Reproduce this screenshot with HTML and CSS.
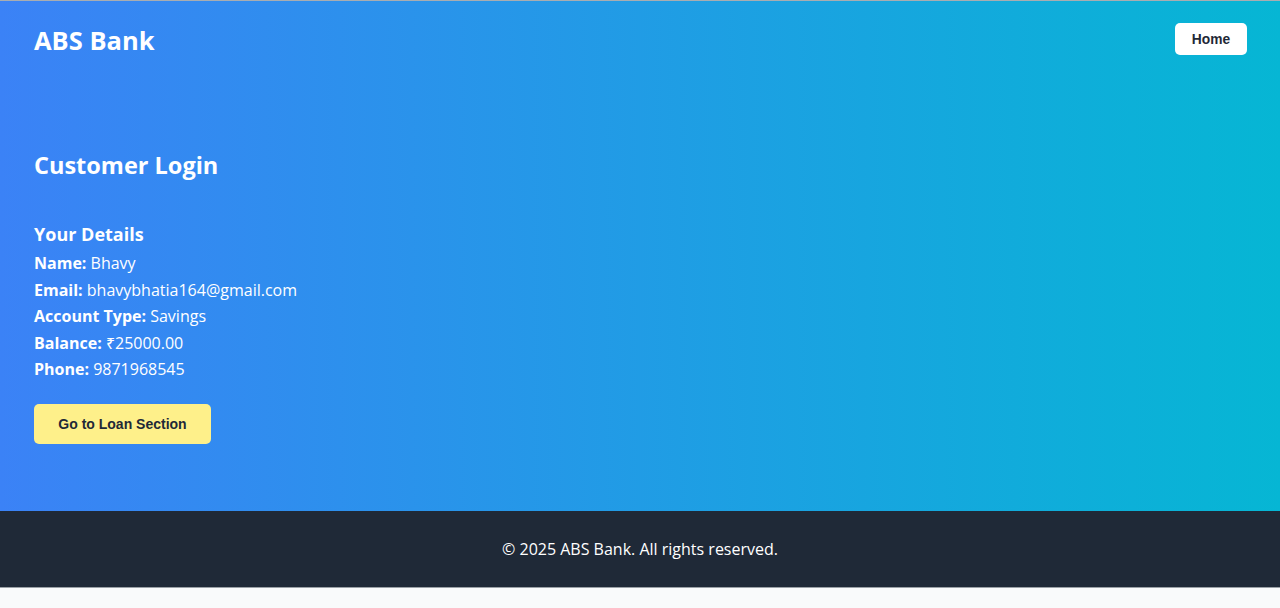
FILE: index.html
```html
<!DOCTYPE html>
<html lang="en">
<head>
<meta charset="utf-8">
<title>ABS Bank - Customer Login</title>
<link rel="stylesheet" href="styles.css">
</head>
<body>
<div class="hero">
  <header class="topbar">
    <h1 class="brand">ABS Bank</h1>
    <button class="home-btn">Home</button>
  </header>
  <main class="content">
    <h2 class="title">Customer Login</h2>
    <section class="details">
      <h3 class="details-title">Your Details</h3>
      <p class="row"><strong>Name:</strong> Bhavy</p>
      <p class="row"><strong>Email:</strong> bhavybhatia164@gmail.com</p>
      <p class="row"><strong>Account Type:</strong> Savings</p>
      <p class="row"><strong>Balance:</strong> ₹25000.00</p>
      <p class="row"><strong>Phone:</strong> 9871968545</p>
      <button class="loan-btn">Go to Loan Section</button>
    </section>
  </main>
</div>
<footer class="footer">© 2025 ABS Bank. All rights reserved.</footer>
</body>
</html>
```
FILE: styles.css
```css
html, body {
  margin: 0;
  padding: 0;
}
body {
  background: #f9fafb;
  font-family: "Open Sans", "Noto Sans", sans-serif;
  color: #ffffff;
}
.hero {
  border-top: 1px solid #a9adb1;
  height: 510px;
  background: linear-gradient(to right, #3b82f6, #06b6d4);
  display: flex;
  flex-direction: column;
}
.topbar {
  display: flex;
  justify-content: space-between;
  align-items: center;
  padding: 21px 33px 0 34px;
}
.brand {
  margin: 1px 0 -1px 0;
  font-size: 25.5px;
  font-weight: 700;
  line-height: 34px;
}
.home-btn {
  background: #ffffff;
  color: #1f2937;
  border: none;
  border-radius: 5px;
  font-family: "Liberation Sans", Arial, sans-serif;
  font-weight: 700;
  font-size: 13.8px;
  width: 72px;
  height: 32px;
  padding: 0;
}
.content {
  padding: 0 34px;
}
.title {
  margin: 94px 0 0 0;
  font-size: 23.5px;
  font-weight: 700;
  line-height: 30px;
}
.details {
  margin-top: 41px;
}
.details-title {
  margin: 0 0 3px 0;
  font-size: 18px;
  font-weight: 700;
  line-height: 26px;
}
.row {
  margin: 0;
  font-size: 16px;
  line-height: 26.6px;
}
.row strong {
  font-weight: 700;
}
.loan-btn {
  margin-top: 21px;
  background: #fef08a;
  color: #1f2937;
  border: none;
  border-radius: 5px;
  font-family: "Liberation Sans", Arial, sans-serif;
  font-weight: 700;
  font-size: 14px;
  width: 177px;
  height: 40px;
  padding: 0;
}
.footer {
  background: #1f2937;
  height: 76px;
  display: flex;
  align-items: center;
  justify-content: center;
  font-size: 16px;
  border-bottom: 1px solid #9aa0a6;
}
```
